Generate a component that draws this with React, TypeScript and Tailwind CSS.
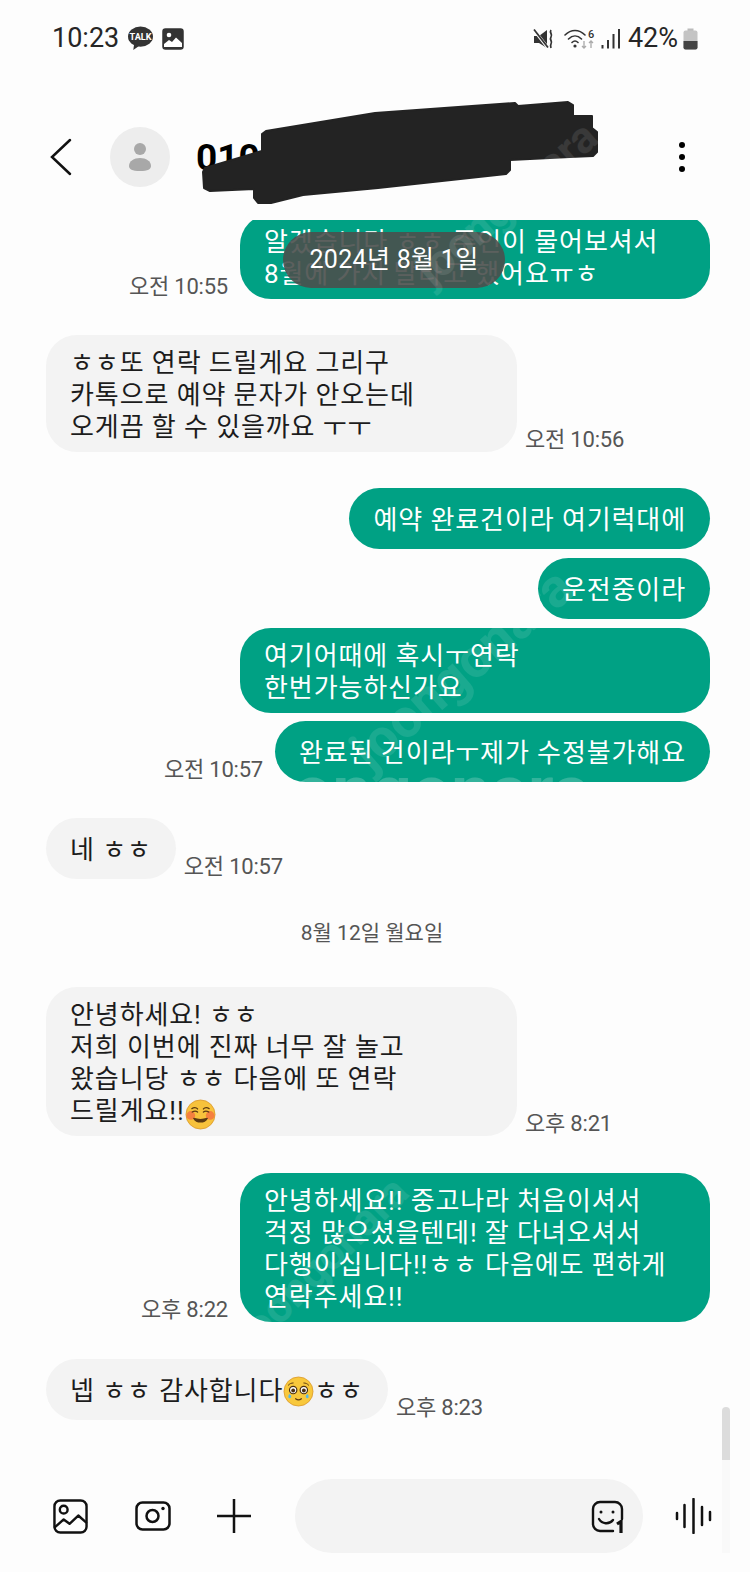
import type { ReactNode } from "react";

const font = "font-['Roboto','Noto_Sans_CJK_KR',sans-serif]";

function SmileEmoji() {
  return (
    <svg viewBox="0 0 32 32" className="inline-block w-[31px] h-[31px] -my-[3px] align-[-7px]">
      <circle cx="16" cy="16" r="15" fill="#f7c23c" />
      <circle cx="16" cy="16" r="15" fill="none" stroke="#d9962a" strokeWidth="0.8" />
      <circle cx="6" cy="17" r="4.5" fill="#f4743f" opacity="0.85" />
      <circle cx="26" cy="17" r="4.5" fill="#f4743f" opacity="0.85" />
      <path d="M7 10c2-1.600 4.500-1.600 6 .3M7.500 13.500c1.800-1.200 4-1.200 5.500 0" fill="none" stroke="#5c3a12" strokeWidth="1.300" strokeLinecap="round" />
      <path d="M25 10c-2-1.600-4.500-1.600-6 .3M24.500 13.500c-1.800-1.200-4-1.200-5.500 0" fill="none" stroke="#5c3a12" strokeWidth="1.300" strokeLinecap="round" />
      <path d="M9 20c3 5 11 5 14 0-4 1.400-10 1.400-14 0z" fill="#5c3a12" stroke="#5c3a12" strokeWidth="1.200" strokeLinejoin="round" />
    </svg>
  );
}

function PleadEmoji() {
  return (
    <svg viewBox="0 0 32 32" className="inline-block w-[31px] h-[31px] align-[-7px]">
      <circle cx="16" cy="16" r="15" fill="#f8c83c" />
      <circle cx="16" cy="16" r="15" fill="none" stroke="#d9962a" strokeWidth="0.8" />
      <path d="M5.500 9.500c1.500-1.600 3-2.300 5-2.300M26.500 9.500c-1.500-1.600-3-2.300-5-2.300" fill="none" stroke="#5c3a12" strokeWidth="1" strokeLinecap="round" />
      <circle cx="10.500" cy="14.500" r="3.800" fill="#fff" stroke="#4a2f10" strokeWidth="1.200" />
      <circle cx="21.500" cy="14.500" r="3.800" fill="#fff" stroke="#4a2f10" strokeWidth="1.200" />
      <circle cx="10.500" cy="15" r="2" fill="#4a2f10" />
      <circle cx="21.500" cy="15" r="2" fill="#4a2f10" />
      <path d="M6.500 18.500c-1.200 1.800-1.300 3.500-.3 4.200 1.200.7 2.500-.3 2.300-2.200zM25.500 18.500c1.200 1.800 1.300 3.500.3 4.200-1.200.7-2.500-.3-2.300-2.200z" fill="#58b8e8" />
      <path d="M13 23.500c1.800 1.300 4.200 1.300 6 0" fill="none" stroke="#5c3a12" strokeWidth="1.300" strokeLinecap="round" />
    </svg>
  );
}

function Bubble({ mine, width, children }: { mine?: boolean; width?: string; children: ReactNode }) {
  return (
    <div
      className={`${width ?? "w-fit"} min-h-[61px] flex items-center rounded-[31px] px-[24px] py-[9.500px] whitespace-pre-line text-[26px] leading-[32px] tracking-[0.9px] ${
        mine ? "bg-[#00a184] text-white" : "bg-[#f3f3f3] text-[#1c1c1c]"
      }`}
    >
      <div className="pt-[2px]">{children}</div>
    </div>
  );
}

function Time({ children }: { children: ReactNode }) {
  return <span className="text-[22px] leading-[24px] text-[#555] whitespace-nowrap tracking-[-0.2px]">{children}</span>;
}

function Sent({ time, width, mt, children }: { time?: string; width?: string; mt: string; children: ReactNode }) {
  return (
    <div className={`flex justify-end items-end gap-[12px] ${mt}`}>
      {time && <Time>{time}</Time>}
      <Bubble mine width={width}>{children}</Bubble>
    </div>
  );
}

function Received({ time, width, mt, children }: { time: string; width?: string; mt: string; children: ReactNode }) {
  return (
    <div className={`flex items-end gap-[8px] ${mt}`}>
      <Bubble width={width}>{children}</Bubble>
      <Time>{time}</Time>
    </div>
  );
}

function StatusLeft() {
  return (
    <div className="flex items-center">
      <span className="text-[27px] leading-none text-[#262626]">10:23</span>
      <svg viewBox="0 0 27 26" className="w-[27px] h-[25px] ml-[8px]">
        <ellipse cx="13.500" cy="11" rx="13" ry="10.500" fill="#333" />
        <path d="M7 18l-1 7 7-5z" fill="#333" />
        <text x="13.500" y="14.500" textAnchor="middle" fontSize="9.500" fontWeight="700" fill="#fff" fontFamily="Roboto">TALK</text>
      </svg>
      <svg viewBox="0 0 22 22" className="w-[22px] h-[22px] ml-[8px]">
        <rect x="1" y="1" width="20" height="20" rx="2.500" fill="#333" stroke="#333" strokeWidth="1.500" />
        <circle cx="7" cy="7" r="2.300" fill="#fff" />
        <path d="M2 16l5-4 3 2 4-4.500 6 5.500v4H2z" fill="#fff" />
      </svg>
    </div>
  );
}

function StatusRight() {
  return (
    <div className="flex items-center">
      <svg viewBox="0 0 22 22" className="w-[22px] h-[22px]">
        <path d="M1 8h5l8-6v18l-8-5H1z" fill="#333" />
        <path d="M1 2l14 18" stroke="#fff" strokeWidth="3" />
        <path d="M1 1.500l14 18" stroke="#333" strokeWidth="1.800" />
        <path d="M18 2c-2 3 2 4 0 7s2 4 0 7c-.6 1-.6 2 0 4" fill="none" stroke="#333" strokeWidth="1.700" />
      </svg>
      <svg viewBox="0 0 32 24" className="w-[32px] h-[24px] ml-[9px]">
        <path d="M1 8c6-6 14-6 20 0M4.500 12c4-4 9-4 13 0M8 15.500c2-2 4-2 6 0" fill="none" stroke="#333" strokeWidth="1.600" strokeLinecap="round" />
        <circle cx="11" cy="19" r="1.600" fill="#333" />
        <text x="24" y="11" fontSize="11" fontWeight="500" fill="#333" fontFamily="Roboto">6</text>
        <path d="M20 14v7m-2-2 2 2 2-2" fill="none" stroke="#aaa" strokeWidth="1.300" />
        <path d="M27 21v-7m-2 2 2-2 2 2" fill="none" stroke="#aaa" strokeWidth="1.300" />
      </svg>
      <svg viewBox="0 0 20 22" className="w-[20px] h-[22px] ml-[5px]">
        <rect x="0.500" y="17" width="2" height="3.500" fill="#333" />
        <rect x="6" y="12" width="2" height="8.500" fill="#333" />
        <rect x="11.500" y="6" width="2" height="14.500" fill="#333" />
        <rect x="17" y="1" width="2" height="19.500" fill="#333" />
      </svg>
      <span className="text-[27px] leading-none text-[#262626] ml-[7px]">42%</span>
      <svg viewBox="0 0 15 22" className="w-[15px] h-[22px] ml-[5px]">
        <rect x="4.500" y="0.500" width="6" height="3" fill="#bbb" />
        <rect x="0.500" y="2.500" width="14" height="19" rx="2" fill="#c4c4c4" />
        <path d="M.5 13h14v6.500a2 2 0 0 1-2 2h-10a2 2 0 0 1-2-2z" fill="#444" />
      </svg>
    </div>
  );
}

function Composer() {
  return (
    <div className="h-[93px] shrink-0 flex items-start pl-[53px]">
      <svg viewBox="0 0 36 36" className="w-[35px] h-[35px] mt-[20px]" fill="none" stroke="#111" strokeWidth="2.500" strokeLinejoin="round">
        <rect x="1.500" y="1.500" width="33" height="33" rx="6" />
        <circle cx="11" cy="11" r="4" />
        <path d="M2 29l9-8 6 4.500 9-8.500 8 7" strokeLinecap="round" />
      </svg>
      <svg viewBox="0 0 36 30" className="w-[36px] h-[30px] ml-[47px] mt-[22px]" fill="none" stroke="#111" strokeWidth="2.500">
        <rect x="1.500" y="1.500" width="33" height="27" rx="6" />
        <circle cx="17.500" cy="15" r="6" />
        <circle cx="28" cy="7.500" r="1.700" fill="#111" stroke="none" />
      </svg>
      <svg viewBox="0 0 34 34" className="w-[34px] h-[34px] ml-[46px] mt-[20px]" stroke="#111" strokeWidth="2.500">
        <path d="M0 17h34M17 0v34" />
      </svg>
      <div className="w-[348px] h-[74px] ml-[44px] rounded-[37px] bg-[#f3f3f3] flex items-center justify-end pr-[19px]">
        <svg viewBox="0 0 33 33" className="w-[33px] h-[33px]" fill="none" stroke="#111" strokeWidth="2.400" strokeLinecap="round">
          <path d="M22 31H9a7 7 0 0 1-7-7V9a7 7 0 0 1 7-7h15a7 7 0 0 1 7 7v10" />
          <circle cx="10" cy="12" r="1.500" fill="#111" stroke="none" />
          <circle cx="22" cy="12" r="1.500" fill="#111" stroke="none" />
          <path d="M8 19c3 5 10 6 14 1" />
          <path d="M26 24l4-2.500V33" strokeWidth="3.200" strokeLinecap="butt" />
        </svg>
      </div>
      <svg viewBox="0 0 37 36" className="w-[37px] h-[36px] ml-[32px] mt-[19px]" stroke="#111" strokeWidth="2.500" strokeLinecap="round">
        <path d="M2 15v6M9.500 7v22M18.500 1v34M27 9v18M35 14v8" />
      </svg>
    </div>
  );
}

export default function App() {
  return (
    <div className={`relative w-[750px] h-[1572px] overflow-hidden bg-[#fdfdfd] flex flex-col ${font}`}>
      <div className="h-[77px] shrink-0 flex items-center justify-between pl-[52px] pr-[52px]">
        <StatusLeft />
        <StatusRight />
      </div>

      <div className="h-[143px] shrink-0 flex items-center pl-[50px] pt-[17px]">
        <svg viewBox="0 0 22 38" className="w-[22px] h-[38px]" fill="none" stroke="#111" strokeWidth="2.500" strokeLinecap="round">
          <path d="M20 2L2 19l18 17" />
        </svg>
        <div className="w-[60px] h-[60px] ml-[38px] rounded-full bg-[#ededed] flex items-center justify-center">
          <svg viewBox="0 0 22 30" className="w-[22px] h-[30px]">
            <circle cx="11" cy="7" r="6" fill="#a8a8a8" />
            <path d="M0 24c0-5 5-8 11-8s11 3 11 8c0 3-3 5-11 5S0 27 0 24z" fill="#a8a8a8" />
          </svg>
        </div>
        <span className="ml-[26px] text-[37px] font-bold text-black leading-none">010</span>
        <div className="ml-auto mr-[65px] flex flex-col gap-[6px]">
          <span className="w-[6px] h-[6px] rounded-full bg-black" />
          <span className="w-[6px] h-[6px] rounded-full bg-black" />
          <span className="w-[6px] h-[6px] rounded-full bg-black" />
        </div>
      </div>

      <div className="flex-1 overflow-hidden pl-[46px] pr-[40px]">
        <Sent time="오전 10:55" width="w-[470px]" mt="-mt-[6px]">{"알겠습니다 ㅎㅎ 주인이 물어보셔서\n8월에 가지 말라고 했어요ㅠㅎ"}</Sent>
        <Received time="오전 10:56" width="w-[471px]" mt="mt-[36px]">{"ㅎㅎ또 연락 드릴게요 그리구\n카톡으로 예약 문자가 안오는데\n오게끔 할 수 있을까요 ㅜㅜ"}</Received>
        <Sent mt="mt-[36px]">예약 완료건이라 여기럭대에</Sent>
        <Sent mt="mt-[9px]">운전중이라</Sent>
        <Sent width="w-[470px]" mt="mt-[9px]">{"여기어때에 혹시ㅜ연락\n한번가능하신가요"}</Sent>
        <Sent time="오전 10:57" mt="mt-[8px]">완료된 건이라ㅜ제가 수정불가해요</Sent>
        <Received time="오전 10:57" mt="mt-[36px]">네 ㅎㅎ</Received>
        <div className="mt-[40px] mb-[40px] h-[28px] text-center text-[21px] leading-[28px] text-[#555] pr-[12px]">8월 12일 월요일</div>
        <Received time="오후 8:21" width="w-[471px]" mt="mt-0">
          안녕하세요! ㅎㅎ{"\n"}저희 이번에 진짜 너무 잘 놀고{"\n"}왔습니당 ㅎㅎ 다음에 또 연락{"\n"}드릴게요!!<SmileEmoji />
        </Received>
        <Sent time="오후 8:22" width="w-[470px]" mt="mt-[37px]">{"안녕하세요!! 중고나라 처음이셔서\n걱정 많으셨을텐데! 잘 다녀오셔서\n다행이십니다!!ㅎㅎ 다음에도 편하게\n연락주세요!!"}</Sent>
        <Received time="오후 8:23" mt="mt-[37px]">
          넵 ㅎㅎ 감사합니다<PleadEmoji />ㅎㅎ
        </Received>
      </div>

      <Composer />

      {/* redacted phone number, drawn over the title */}
      <svg viewBox="0 0 750 220" className="absolute left-0 top-0 w-[750px] h-[220px] pointer-events-none">
        <path
          d="M203 172l2-4 57-17 0-17 4-3 109-18 140-10 3 3 50-4 5 3 0 11 19 0 0 12 5 4 0 20-4 4-23 1-60 3 0 10-4 4-128 14-75 7-32 8-13 0-4-5 0-9-44 2-6-3z"
          fill="#232323"
          stroke="#232323"
          strokeWidth="2"
          strokeLinejoin="round"
        />
      </svg>

      {/* date pill floating over the list */}
      <div className="absolute left-[283px] top-[232px] w-[222px] h-[56px] rounded-[28px] bg-[#4a4f4d]/90 flex items-center justify-center text-[25px] tracking-[0.3px] text-white">
        2024년 8월 1일
      </div>

      {/* scrollbar */}
      <div className="absolute left-[722px] top-[1407px] w-[8px] h-[53px] rounded-t-[4px] bg-[#dcdcdc]" />
      <div className="absolute left-[722px] top-[1460px] w-[8px] h-[93px] bg-[#f9f9f9]" />

      {/* site watermark */}
      <span className="absolute left-[395px] top-[170px] -rotate-[41deg] text-[44px] font-bold text-white/10 whitespace-nowrap pointer-events-none">joongonara</span>
      <span className="absolute left-[325px] top-[628px] -rotate-[41deg] text-[54px] font-bold text-white/10 whitespace-nowrap pointer-events-none">joongonara</span>
      <span className="absolute left-[293px] top-[756px] text-[70px] leading-none font-bold text-white/20 whitespace-nowrap pointer-events-none">ongonara</span>
      <span className="absolute left-[210px] top-[1230px] -rotate-45 text-[44px] font-bold text-white/10 whitespace-nowrap pointer-events-none">joongonara</span>
    </div>
  );
}
